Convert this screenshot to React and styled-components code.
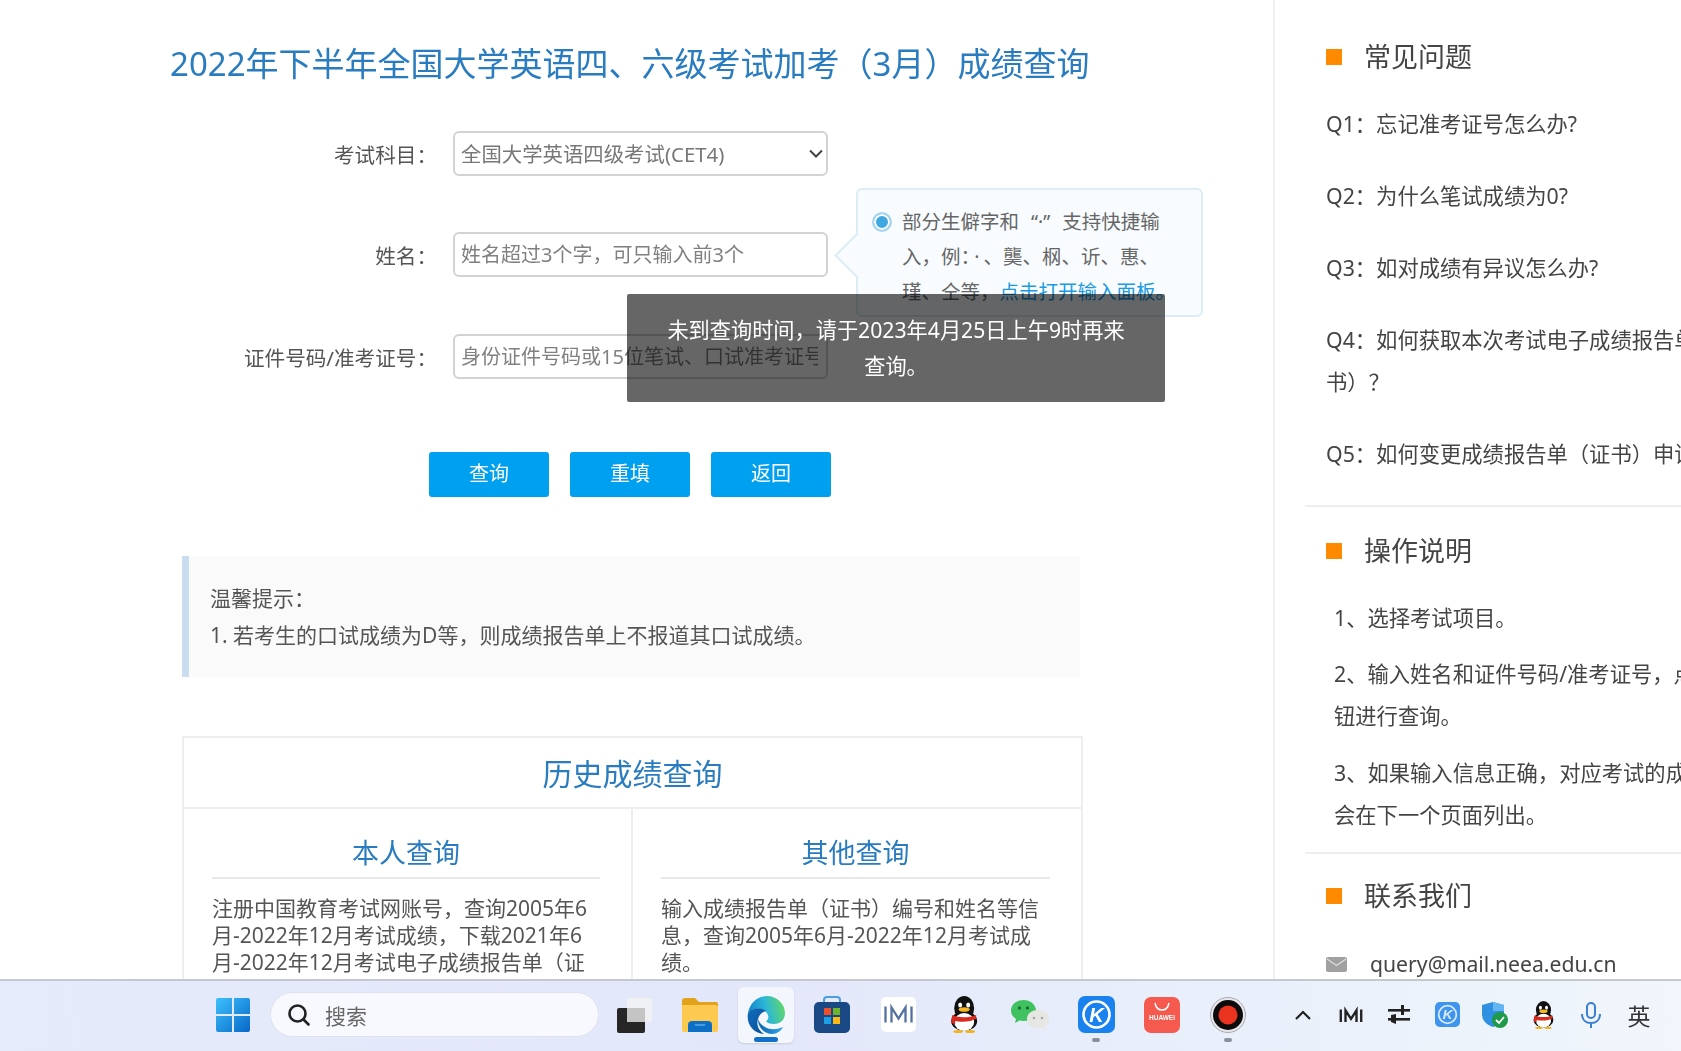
import React from 'react'
import styled, { createGlobalStyle } from 'styled-components'

const FONT = '"Noto Sans", "Noto Sans CJK SC", sans-serif'
const ARROW = "url(\"data:image/svg+xml,%3Csvg xmlns='http://www.w3.org/2000/svg' width='14' height='9'%3E%3Cpath d='M1 1.500l6 6 6-6' fill='none' stroke='%23444' stroke-width='2'/%3E%3C/svg%3E\")"

const GlobalStyle = createGlobalStyle`
  html, body {
    margin: 0;
    padding: 0;
    height: 100%;
    overflow: hidden;
    background: #fff;
    font-family: ${FONT};
  }
  * { box-sizing: border-box; }
`

const Screen = styled.div`
  width: 1681px;
  height: 1051px;
  display: flex;
  flex-direction: column;
  overflow: hidden;
  filter: blur(0.35px);
`

const Page = styled.div`
  height: 979px;
  display: flex;
  overflow: hidden;
`

const Main = styled.main`
  position: relative;
  width: 1275px;
  flex: none;
  border-right: 2px solid #f0f0f0;
  padding: 42px 0 0 170px;
`

const Title = styled.h1`
  margin: 0;
  font-size: 33px;
  line-height: 44px;
  font-weight: 400;
  color: #2a7cc0;
  white-space: nowrap;
`

const Form = styled.form`
  margin-top: 45px;
  display: flex;
  flex-direction: column;
  gap: 56px;
`

const Row = styled.div`
  position: relative;
  display: flex;
  align-items: center;
  gap: 16px;
  height: 45px;
  margin-top: ${(props) => props.$nudge || 0}px;
`

const Label = styled.label`
  width: 267px;
  text-align: right;
  font-size: 20.6px;
  color: #555;
  white-space: nowrap;
`

const Select = styled.select`
  appearance: none;
  width: 375px;
  height: 45px;
  border: 2px solid #d2d2d2;
  border-radius: 6px;
  background: #fff ${ARROW} no-repeat right 3px center;
  padding: 0 24px 0 6px;
  font-family: ${FONT};
  font-size: 20.4px;
  color: #777;
  outline: none;
`

const Input = styled.input`
  width: 375px;
  height: 45px;
  border: 2px solid #d2d2d2;
  border-radius: 6px;
  background: #fff;
  padding: 0 8px 0 6px;
  font-family: ${FONT};
  font-size: 20px;
  outline: none;

  &::placeholder {
    color: #808080;
    opacity: 1;
  }
`

const Hint = styled.div`
  position: absolute;
  left: 686px;
  top: -44px;
  width: 347px;
  height: 129px;
  border: 2px solid #dcedf6;
  border-radius: 6px;
  background: #f8fcff;
  padding: 14px 0 0 44px;
  font-size: 19.5px;
  line-height: 35px;
  color: #666;
  white-space: nowrap;

  &::before {
    content: '';
    position: absolute;
    left: -17px;
    top: 49px;
    width: 31px;
    height: 31px;
    background: #f8fcff;
    border-left: 2px solid #dcedf6;
    border-bottom: 2px solid #dcedf6;
    transform: rotate(45deg);
  }
`

const HintDot = styled.span`
  position: absolute;
  left: 14px;
  top: 22px;
  width: 20px;
  height: 20px;
  border-radius: 50%;
  border: 2px solid #a6d5ee;
  background: #3fa8e0;
  box-shadow: inset 0 0 0 2px #fff;
`

const HintLine = styled.div``

const HintMark = styled.span`
  margin: 0 ${(props) => props.$space}px;
`

const HintLink = styled.a`
  color: #1d9be0;
`

const Buttons = styled.div`
  margin: 73px 0 0 259px;
  display: flex;
  gap: 21px;
`

const Button = styled.button`
  width: 120px;
  height: 45px;
  border: none;
  border-radius: 3px;
  background: #00a0f0;
  padding: 0 0 4px;
  color: #fff;
  font-family: ${FONT};
  font-size: 20px;
`

const Notice = styled.div`
  margin: 59px 0 0 12px;
  width: 898px;
  height: 121px;
  border-left: 7px solid #c9dcf0;
  background: #fafafa;
  padding: 24px 0 0 21px;
  font-size: 21px;
  line-height: 37px;
  color: #555;
`

const HistoryCard = styled.section`
  margin: 59px 0 0 12px;
  width: 901px;
  border: 2px solid #eee;
`

const HistoryHead = styled.h2`
  margin: 0;
  height: 71px;
  border-bottom: 2px solid #eee;
  text-align: center;
  font-size: 30px;
  line-height: 71px;
  font-weight: 400;
  color: #2a7cc0;
`

const Columns = styled.div`
  display: grid;
  grid-template-columns: 449px 1fr;
`

const Column = styled.div`
  padding: 20px 31px 40px 28px;
  border-right: ${(props) => (props.$divided ? '2px solid #eee' : 'none')};
`

const ColumnTitle = styled.h3`
  margin: 0;
  height: 50px;
  border-bottom: 2px solid #e8e8e8;
  text-align: center;
  font-size: 27px;
  line-height: 48px;
  font-weight: 400;
  color: #2a7cc0;
`

const ColumnText = styled.p`
  margin: 16px 0 0;
  font-size: 21px;
  line-height: 27px;
  color: #555;
`

const Toast = styled.div`
  position: absolute;
  left: 627px;
  top: 294px;
  width: 538px;
  height: 108px;
  border-radius: 2px;
  background: rgba(0, 0, 0, 0.6);
  padding: 18px 30px 0;
  text-align: center;
  font-size: 21.2px;
  line-height: 36px;
  color: #fff;
`

const Side = styled.aside`
  flex: 1;
  min-width: 0;
  padding-left: 30px;
  overflow: hidden;
  white-space: nowrap;
`

const SideBlock = styled.section`
  height: ${(props) => props.$height}px;
  border-bottom: ${(props) => (props.$last ? 'none' : '2px solid #eee')};
  padding: ${(props) => props.$top}px 0 0 21px;
`

const SideHead = styled.h4`
  margin: 0;
  display: flex;
  align-items: center;
  gap: 22px;
  height: 44px;
  font-size: 27px;
  font-weight: 400;
  color: #444;

  &::before {
    content: '';
    width: 16px;
    height: 16px;
    margin-top: 4px;
    background: #ff8a00;
  }
`

const SideText = styled.p`
  margin: ${(props) => props.$gap}px 0 0;
  padding-left: ${(props) => props.$indent || 0}px;
  font-size: 21.3px;
  line-height: 42px;
  color: #444;
`

const MailRow = styled.div`
  display: flex;
  align-items: center;
  gap: 23px;
  margin-top: 27px;
  font-size: 21.2px;
  line-height: 42px;
  color: #444;
`

const Taskbar = styled.footer`
  height: 72px;
  flex: none;
  border-top: 2px solid #c6c8d0;
  background: linear-gradient(90deg, #e6ebfb 0%, #e3e7fa 45%, #eaf0fb 75%, #f0f6fb 100%);
  display: flex;
  align-items: center;
  padding: 0 18px 3px 200px;
`

const Slot = styled.div`
  position: relative;
  width: 66px;
  height: 56px;
  display: flex;
  align-items: center;
  justify-content: center;
  flex: none;

  &::before {
    content: '';
    position: absolute;
    inset: 0 5px;
    border-radius: 6px;
    background: ${(props) => (props.$active ? '#f4f6fd' : 'transparent')};
    box-shadow: ${(props) => (props.$active ? '0 1px 2px rgba(0,0,0,.12)' : 'none')};
  }

  svg {
    position: relative;
  }
`

const RunDot = styled.span`
  position: absolute;
  left: 50%;
  bottom: 1px;
  width: ${(props) => (props.$active ? 24 : 8)}px;
  height: ${(props) => (props.$active ? 5 : 4)}px;
  margin-left: ${(props) => (props.$active ? -12 : -4)}px;
  border-radius: 3px;
  background: ${(props) => (props.$active ? '#0f6fcb' : '#8a8f9c')};
`

const SearchBox = styled.div`
  width: 329px;
  height: 45px;
  margin: 0 2px 0 4px;
  flex: none;
  border-radius: 23px;
  border: 1px solid #dfe2ee;
  background: #f8f9fe;
  display: flex;
  align-items: center;
  gap: 13px;
  padding-left: 15px;
  font-size: 21px;
  color: #666;
`

const Tray = styled.div`
  margin-left: auto;
  display: flex;
  align-items: center;
`

const TrayItem = styled.div`
  width: 48px;
  height: 40px;
  display: flex;
  align-items: center;
  justify-content: center;
  font-size: 23px;
  color: #333;
`

const WinIcon = () => (
  <svg width="34" height="34" viewBox="0 0 34 34">
    <defs>
      <linearGradient id="win" x1="0" y1="0" x2="1" y2="1">
        <stop offset="0" stopColor="#3cc0fd" />
        <stop offset="1" stopColor="#0868c8" />
      </linearGradient>
    </defs>
    <path d="M2 0h14v16H0V2a2 2 0 0 1 2-2zM18 0h14a2 2 0 0 1 2 2v14H18zM0 18h16v16H2a2 2 0 0 1-2-2zM18 18h16v14a2 2 0 0 1-2 2H18z" fill="url(#win)" />
  </svg>
)

const SearchIcon = () => (
  <svg width="26" height="26" viewBox="0 0 26 26" fill="none" stroke="#222" strokeWidth="2.6" strokeLinecap="round">
    <circle cx="11.5" cy="11.5" r="8" />
    <path d="M17.5 17.5l5 5" />
  </svg>
)

const TaskViewIcon = () => (
  <svg width="36" height="36" viewBox="0 0 36 36">
    <rect x="1" y="11" width="28" height="25" rx="2" fill="#262626" />
    <rect x="11" y="1" width="25" height="24" rx="2" fill="#f3f3f3" fillOpacity="0.8" />
    <rect x="11" y="11" width="18" height="14" fill="#c4c4c4" />
  </svg>
)

const FolderIcon = () => (
  <svg width="38" height="36" viewBox="0 0 38 36">
    <path d="M1 4a3 3 0 0 1 3-3h10l4 4h17a2 2 0 0 1 2 2v6H1z" fill="#e3a21c" />
    <path d="M1 8h34a2 2 0 0 1 2 2v23a2 2 0 0 1-2 2H3a2 2 0 0 1-2-2z" fill="#fdc950" />
    <path d="M7 35v-7a4 4 0 0 1 4-4h16a4 4 0 0 1 4 4v7z" fill="#0e6fc7" />
    <rect x="14" y="27" width="10" height="2" fill="#4a9ae0" />
  </svg>
)

const EdgeIcon = () => (
  <svg width="40" height="40" viewBox="0 0 40 40">
    <defs>
      <linearGradient id="edgeTop" x1="0" y1="0.6" x2="1" y2="0.4">
        <stop offset="0" stopColor="#1481c9" />
        <stop offset="0.5" stopColor="#2cb6d8" />
        <stop offset="1" stopColor="#62d968" />
      </linearGradient>
      <linearGradient id="edgeLeft" x1="0" y1="0" x2="1" y2="1">
        <stop offset="0" stopColor="#0f6cbc" />
        <stop offset="1" stopColor="#0b4f97" />
      </linearGradient>
      <linearGradient id="edgeLow" x1="0" y1="0" x2="1" y2="0">
        <stop offset="0" stopColor="#0d63b0" />
        <stop offset="1" stopColor="#2fa6e8" />
      </linearGradient>
    </defs>
    <path d="M2 18C4 8 11 1 21 1c10 0 18 8 18 17 0 7-5 11-11 11-4 0-7-1-8-3 2-1 3-3 2-6-2-5-8-7-13-6-3 1-6 2-7 4z" fill="url(#edgeTop)" />
    <path d="M2 18C0 29 7 38 18 39c-5-3-8-9-6-15 1-4 4-7 8-8-5-4-15-3-18 2z" fill="url(#edgeLeft)" />
    <path d="M12 24c0 9 7 15 14 15 5 0 9-3 11-7-7 3-13 3-18 0-4-2-6-5-7-8z" fill="url(#edgeLow)" />
  </svg>
)

const StoreIcon = () => (
  <svg width="36" height="37" viewBox="0 0 36 37">
    <path d="M10 8V4a3 3 0 0 1 3-3h10a3 3 0 0 1 3 3v4" fill="none" stroke="#4aa0dc" strokeWidth="2" />
    <rect x="0" y="6" width="36" height="31" rx="5" fill="#1a4884" />
    <rect x="10" y="12" width="7" height="7" fill="#ee4f2b" />
    <rect x="19" y="12" width="7" height="7" fill="#6fb52c" />
    <rect x="10" y="21" width="7" height="7" fill="#1d9fe8" />
    <rect x="19" y="21" width="7" height="7" fill="#fdb913" />
  </svg>
)

const MarkM = ({ color, width = 2.6 }) => (
  <path d="M2 7v16M8 23V8l7 11 7-11v15M28 7v16" fill="none" stroke={color} strokeWidth={width} />
)

const BrandIcon = () => (
  <svg width="35" height="35" viewBox="0 0 35 35">
    <rect width="35" height="35" rx="5" fill="#fff" />
    <g transform="translate(2.5 2.5)">
      <MarkM color="#54719f" width={2.3} />
    </g>
  </svg>
)

const QqIcon = ({ size = 37 }) => (
  <svg width={size * 0.82} height={size} viewBox="0 0 30 37">
    <ellipse cx="15" cy="12" rx="10" ry="12" fill="#111" />
    <ellipse cx="15" cy="25" rx="13" ry="10" fill="#111" />
    <ellipse cx="15" cy="26" rx="10" ry="9" fill="#fff" />
    <ellipse cx="11" cy="9" rx="2" ry="2.6" fill="#fff" />
    <ellipse cx="19" cy="9" rx="2" ry="2.6" fill="#fff" />
    <ellipse cx="15" cy="13.5" rx="5.5" ry="2.3" fill="#f6b81e" />
    <path d="M3 19c7 3 17 3 24 0v4c-4 1-5 2-6 2-5 1-11 1-15 0v3l-4-1z" fill="#d92a1e" />
    <ellipse cx="9" cy="35.5" rx="5" ry="1.6" fill="#f2b21e" />
    <ellipse cx="21" cy="35.5" rx="5" ry="1.6" fill="#f2b21e" />
  </svg>
)

const WechatIcon = () => (
  <svg width="38" height="30" viewBox="0 0 38 30">
    <path d="M12.5 0C19.4 0 25 4.7 25 10.5S19.4 21 12.5 21c-1.4 0-2.7-.2-3.9-.5L4 23l1-4C2 17 0 14 0 10.5 0 4.7 5.6 0 12.5 0z" fill="#3fc25f" />
    <circle cx="8.5" cy="8" r="1.7" fill="#1c6e36" />
    <circle cx="16.5" cy="8" r="1.7" fill="#1c6e36" />
    <path d="M27 10c6 0 11 4 11 9s-2.5 6-4 7l1 4-4-2c-1.3.4-2.6.5-4 .5-6 0-11-4-11-9.5S21 10 27 10z" fill="#e6e6e2" />
    <circle cx="23" cy="18" r="1.3" fill="#a8a8a8" />
    <circle cx="31" cy="18" r="1.3" fill="#a8a8a8" />
  </svg>
)

const KIcon = ({ size = 37, bg = '#1a82ef', ring = '#fff' }) => (
  <svg width={size} height={size} viewBox="0 0 37 37">
    <rect width="37" height="37" rx="7" fill={bg} />
    <circle cx="18.5" cy="18.5" r="13" fill="none" stroke={ring} strokeWidth="2.6" />
    <text x="18.5" y="25.5" textAnchor="middle" fontFamily="Liberation Sans, sans-serif" fontSize="20" fontWeight="700" fontStyle="italic" fill={ring}>K</text>
  </svg>
)

const HuaweiIcon = () => (
  <svg width="36" height="36" viewBox="0 0 36 36">
    <rect width="36" height="36" rx="7" fill="#f65a4e" />
    <path d="M11 6c1 5 4 7 7 7s6-2 7-7" fill="none" stroke="#fff" strokeWidth="1.5" />
    <text x="18" y="23" textAnchor="middle" fontFamily="Liberation Sans, sans-serif" fontSize="6.5" fontWeight="700" fill="#fff">HUAWEI</text>
  </svg>
)

const RecordIcon = () => (
  <svg width="36" height="36" viewBox="0 0 36 36">
    <circle cx="18" cy="18" r="17.5" fill="#e8e8ee" stroke="#a8a8ae" />
    <circle cx="18" cy="18" r="15" fill="#0c0c0c" />
    <circle cx="18" cy="18" r="9.5" fill="#ea3420" />
  </svg>
)

const ChevronIcon = () => (
  <svg width="18" height="12" viewBox="0 0 18 12" fill="none" stroke="#222" strokeWidth="2.2">
    <path d="M2 10l7-7 7 7" />
  </svg>
)

const TrayBrandIcon = () => (
  <svg width="24" height="22" viewBox="0 0 30 28">
    <MarkM color="#222" width={3} />
  </svg>
)

const SwitchIcon = () => (
  <svg width="22" height="20" viewBox="0 0 22 20" fill="#222">
    <rect x="0" y="4" width="22" height="2.6" />
    <rect x="0" y="13" width="22" height="2.6" />
    <path d="M13 0h3v10h-3zM3 10l5-1v10l-5-2z" />
  </svg>
)

const ShieldIcon = () => (
  <svg width="26" height="26" viewBox="0 0 26 26">
    <path d="M11 0l11 3v9c0 7-5 11-11 13C5 23 0 19 0 12V3z" fill="#2f8fe0" />
    <path d="M11 0l11 3v6H11z" fill="#63b6f2" />
    <circle cx="18" cy="18" r="8" fill="#1f9a4a" />
    <path d="M14 18l3 3 5-6" fill="none" stroke="#fff" strokeWidth="1.8" />
  </svg>
)

const MicIcon = () => (
  <svg width="20" height="26" viewBox="0 0 20 26" fill="none" stroke="#3b7fd0" strokeWidth="2">
    <rect x="6" y="1" width="8" height="15" rx="4" />
    <path d="M1 12c0 6 4 9 9 9s9-3 9-9M10 21v5" />
  </svg>
)

const MailIcon = () => (
  <svg width="21" height="15" viewBox="0 0 21 15">
    <rect width="21" height="15" rx="2" fill="#a0a0a0" />
    <path d="M1 2l9.5 6.5L20 2" fill="none" stroke="#dcdcdc" strokeWidth="1.4" />
  </svg>
)

const App = () => {
  return (
    <Screen>
      <GlobalStyle />
      <Page>
        <Main>
          <Title>2022年下半年全国大学英语四、六级考试加考（3月）成绩查询</Title>
          <Form>
            <Row>
              <Label>考试科目：</Label>
              <Select defaultValue="cet4">
                <option value="cet4">全国大学英语四级考试(CET4)</option>
              </Select>
            </Row>
            <Row>
              <Label>姓名：</Label>
              <Input placeholder="姓名超过3个字，可只输入前3个" />
              <Hint>
                <HintDot />
                <HintLine>部分生僻字和<HintMark $space={12}>“·”</HintMark>支持快捷输</HintLine>
                <HintLine>入，例：<HintMark $space={4}>·</HintMark>、龑、㭎、䜣、惠、</HintLine>
                <HintLine>瑾、仝等，<HintLink>点击打开输入面板。</HintLink></HintLine>
              </Hint>
            </Row>
            <Row $nudge={1}>
              <Label>证件号码/准考证号：</Label>
              <Input placeholder="身份证件号码或15位笔试、口试准考证号" />
            </Row>
          </Form>
          <Buttons>
            <Button>查询</Button>
            <Button>重填</Button>
            <Button>返回</Button>
          </Buttons>
          <Notice>
            温馨提示：<br />
            1. 若考生的口试成绩为D等，则成绩报告单上不报道其口试成绩。
          </Notice>
          <HistoryCard>
            <HistoryHead>历史成绩查询</HistoryHead>
            <Columns>
              <Column $divided>
                <ColumnTitle>本人查询</ColumnTitle>
                <ColumnText>注册中国教育考试网账号，查询2005年6月-2022年12月考试成绩，下载2021年6月-2022年12月考试电子成绩报告单（证</ColumnText>
              </Column>
              <Column>
                <ColumnTitle>其他查询</ColumnTitle>
                <ColumnText>输入成绩报告单（证书）编号和姓名等信息，查询2005年6月-2022年12月考试成绩。</ColumnText>
              </Column>
            </Columns>
          </HistoryCard>
          <Toast>未到查询时间，请于2023年4月25日上午9时再来查询。</Toast>
        </Main>
        <Side>
          <SideBlock $height={507} $top={33}>
            <SideHead>常见问题</SideHead>
            <SideText $gap={26}>Q1：忘记准考证号怎么办?</SideText>
            <SideText $gap={30}>Q2：为什么笔试成绩为0?</SideText>
            <SideText $gap={30}>Q3：如对成绩有异议怎么办?</SideText>
            <SideText $gap={30}>Q4：如何获取本次考试电子成绩报告单（证<br />书）？</SideText>
            <SideText $gap={30}>Q5：如何变更成绩报告单（证书）申请</SideText>
          </SideBlock>
          <SideBlock $height={347} $top={20}>
            <SideHead>操作说明</SideHead>
            <SideText $gap={26} $indent={8}>1、选择考试项目。</SideText>
            <SideText $gap={14} $indent={8}>2、输入姓名和证件号码/准考证号，点击查询按<br />钮进行查询。</SideText>
            <SideText $gap={15} $indent={8}>3、如果输入信息正确，对应考试的成绩将<br />会在下一个页面列出。</SideText>
          </SideBlock>
          <SideBlock $last $height={125} $top={18}>
            <SideHead>联系我们</SideHead>
            <MailRow><MailIcon />query@mail.neea.edu.cn</MailRow>
          </SideBlock>
        </Side>
      </Page>
      <Taskbar>
        <Slot><WinIcon /></Slot>
        <SearchBox><SearchIcon />搜索</SearchBox>
        <Slot><TaskViewIcon /></Slot>
        <Slot><FolderIcon /></Slot>
        <Slot $active><EdgeIcon /><RunDot $active /></Slot>
        <Slot><StoreIcon /></Slot>
        <Slot><BrandIcon /></Slot>
        <Slot><QqIcon /></Slot>
        <Slot><WechatIcon /></Slot>
        <Slot><KIcon /><RunDot /></Slot>
        <Slot><HuaweiIcon /></Slot>
        <Slot><RecordIcon /><RunDot /></Slot>
        <Tray>
          <TrayItem><ChevronIcon /></TrayItem>
          <TrayItem><TrayBrandIcon /></TrayItem>
          <TrayItem><SwitchIcon /></TrayItem>
          <TrayItem><KIcon size={25} bg="#3f94ee" ring="#dbeafc" /></TrayItem>
          <TrayItem><ShieldIcon /></TrayItem>
          <TrayItem><QqIcon size={28} /></TrayItem>
          <TrayItem><MicIcon /></TrayItem>
          <TrayItem>英</TrayItem>
        </Tray>
      </Taskbar>
    </Screen>
  )
}

export default App
